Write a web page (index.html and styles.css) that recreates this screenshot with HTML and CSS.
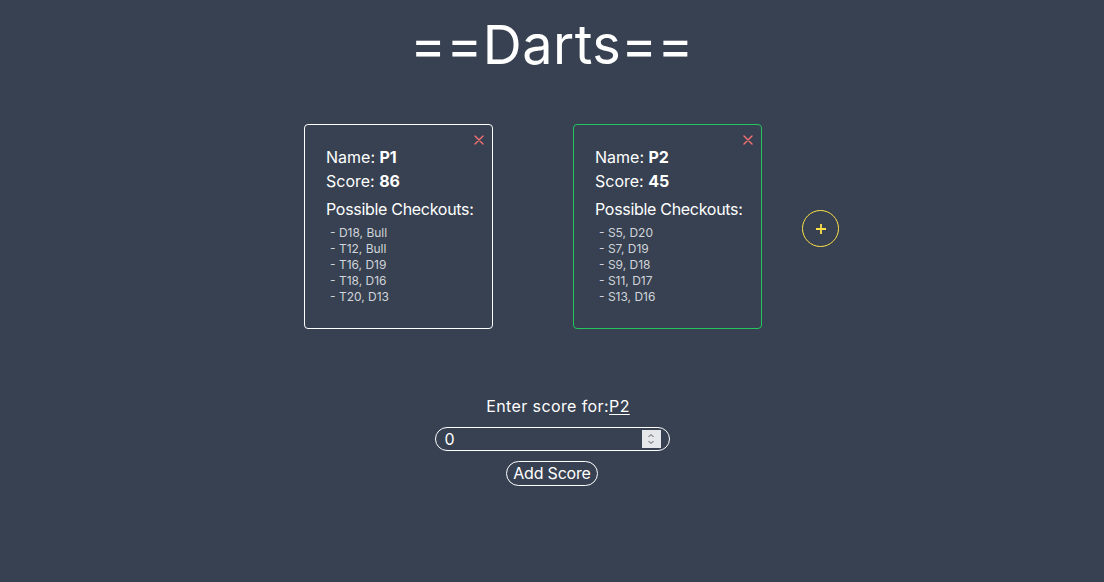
FILE: index.html
```html
<!DOCTYPE html>
<html lang="en">
<head>
<meta charset="utf-8">
<title>Darts</title>
<link rel="stylesheet" href="styles.css">
</head>
<body>
<main class="app">
  <h1 class="title">==Darts==</h1>
  <section class="players">
    <div class="card">
      <button class="close" aria-label="Remove player">
        <svg viewBox="0 0 10 10" width="10" height="10"><path d="M1 1L9 9M9 1L1 9" stroke="currentColor" stroke-width="1.4" stroke-linecap="round"/></svg>
      </button>
      <p class="line">Name: <b>P1</b></p>
      <p class="line">Score: <b>86</b></p>
      <p class="heading">Possible Checkouts:</p>
      <ul class="checkouts">
        <li>- D18, Bull</li>
        <li>- T12, Bull</li>
        <li>- T16, D19</li>
        <li>- T18, D16</li>
        <li>- T20, D13</li>
      </ul>
    </div>
    <div class="card active">
      <button class="close" aria-label="Remove player">
        <svg viewBox="0 0 10 10" width="10" height="10"><path d="M1 1L9 9M9 1L1 9" stroke="currentColor" stroke-width="1.4" stroke-linecap="round"/></svg>
      </button>
      <p class="line">Name: <b>P2</b></p>
      <p class="line">Score: <b>45</b></p>
      <p class="heading">Possible Checkouts:</p>
      <ul class="checkouts">
        <li>- S5, D20</li>
        <li>- S7, D19</li>
        <li>- S9, D18</li>
        <li>- S11, D17</li>
        <li>- S13, D16</li>
      </ul>
    </div>
    <button class="add-player" aria-label="Add player">
      <svg viewBox="0 0 12 12" width="12" height="12"><path d="M6 1V11M1 6H11" stroke="currentColor" stroke-width="1.8"/></svg>
    </button>
  </section>
  <section class="entry">
    <p class="prompt">Enter score for:<a href="#" class="player-link">P2</a></p>
    <div class="input-wrap">
      <input class="score-input" type="text" value="0">
      <span class="spinner">
        <svg viewBox="0 0 10 16" width="10" height="16"><path d="M2.5 6L5 3.5L7.5 6M2.5 10L5 12.5L7.5 10" fill="none" stroke="#555" stroke-width="1" /></svg>
      </span>
    </div>
    <button class="submit">Add Score</button>
  </section>
</main>
</body>
</html>
```
FILE: styles.css
```css
* { box-sizing: border-box; }
html, body {
  margin: 0;
  padding: 0;
  background: #374151;
  color: #ffffff;
  font-family: Inter, "Liberation Sans", sans-serif;
  min-height: 100%;
}
.app {
  display: flex;
  flex-direction: column;
  align-items: center;
}
.title {
  margin: 18px 0 0;
  font-size: 54px;
  line-height: 54px;
  font-weight: 400;
  letter-spacing: 0.5px;
}
.players {
  margin-top: 52px;
  width: 100%;
  display: flex;
  justify-content: center;
  align-items: center;
  padding-left: 39px;
}
.card {
  position: relative;
  width: 189px;
  height: 205px;
  border: 1px solid #ffffff;
  border-radius: 4px;
  padding: 20px 10px 20px 21px;
  margin-right: 80px;
}
.card.active {
  border-color: #22c55e;
  margin-right: 40px;
}
.close {
  position: absolute;
  top: 10px;
  right: 8px;
  padding: 0;
  border: 0;
  background: none;
  color: #f87171;
  display: flex;
  line-height: 0;
}
.line {
  margin: 0;
  font-size: 16px;
  line-height: 24px;
}
.line b { font-weight: 700; }
.heading {
  margin: 4px 0 0;
  font-size: 16px;
  line-height: 24px;
  white-space: nowrap;
  letter-spacing: -0.3px;
}
.checkouts {
  list-style: none;
  margin: 4px 0 0;
  padding: 0 0 0 4px;
  font-size: 12px;
  line-height: 16px;
  color: #d1d5db;
}
.add-player {
  width: 37px;
  height: 37px;
  border-radius: 50%;
  border: 1px solid #fde047;
  background: none;
  color: #fde047;
  display: flex;
  align-items: center;
  justify-content: center;
  padding: 0;
  margin-top: 4px;
}
.entry {
  margin-top: 65px;
  display: flex;
  flex-direction: column;
  align-items: center;
}
.prompt {
  margin: 0;
  font-size: 16px;
  line-height: 24px;
  padding-left: 12px;
  letter-spacing: 0.4px;
}
.player-link {
  color: #ffffff;
  text-decoration: underline;
  text-underline-offset: 2px;
}
.input-wrap {
  position: relative;
  margin-top: 9px;
  width: 235px;
  height: 24px;
}
.score-input {
  width: 100%;
  height: 100%;
  border: 1px solid #ffffff;
  border-radius: 12px;
  background: transparent;
  color: #ffffff;
  font-family: Inter, "Liberation Sans", sans-serif;
  font-size: 16px;
  padding: 0 0 0 9px;
  outline: none;
}
.spinner {
  position: absolute;
  right: 9px;
  top: 3px;
  width: 19px;
  height: 18px;
  background: #e5e7eb;
  display: flex;
  align-items: center;
  justify-content: center;
}
.submit {
  margin-top: 10px;
  height: 25px;
  padding: 0 6px;
  border: 1px solid #ffffff;
  border-radius: 13px;
  background: transparent;
  color: #ffffff;
  font-family: Inter, "Liberation Sans", sans-serif;
  font-size: 16px;
  line-height: 23px;
  letter-spacing: -0.2px;
}
```
